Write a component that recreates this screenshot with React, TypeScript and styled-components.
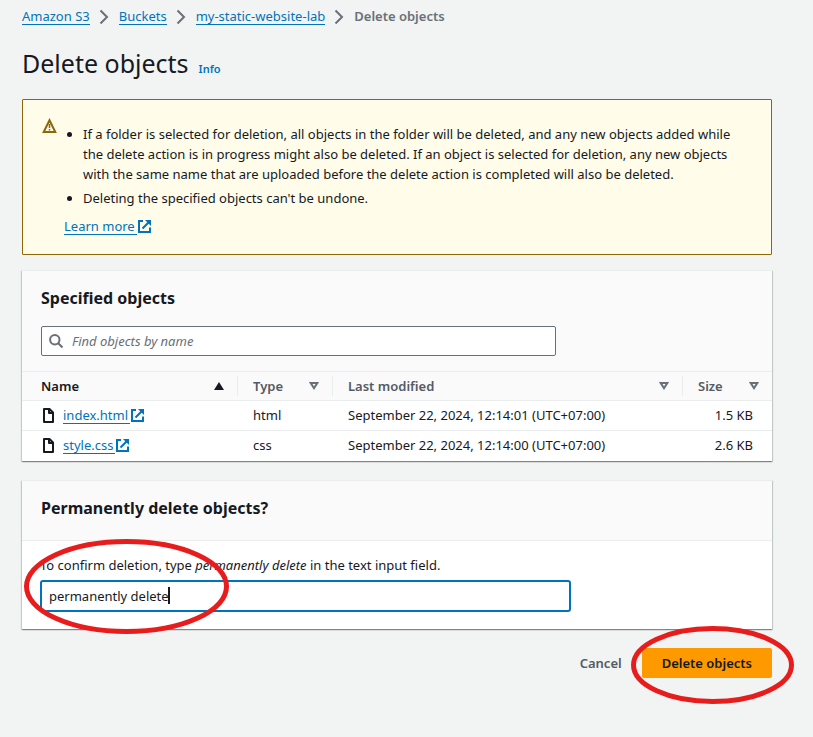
import React, { useState } from "react";
import styled, { createGlobalStyle } from "styled-components";

const GlobalStyle = createGlobalStyle`
  *, *::before, *::after { box-sizing: border-box; }
  body {
    margin: 0;
    background: #f2f3f3;
    color: #16191f;
    font-family: "Noto Sans", "Open Sans", sans-serif;
    font-size: 13px;
    line-height: 20px;
  }
`;

const Page = styled.main`
  padding: 6px 41px 48px 22px;
`;

const Crumbs = styled.ol`
  display: flex;
  align-items: center;
  flex-wrap: wrap;
  gap: 10px;
  margin: 0;
  padding: 0;
  list-style: none;
`;

const Crumb = styled.li`
  display: flex;
  align-items: center;
  gap: 9px;
  color: #687078;
  font-weight: 600;
`;

const TextLink = styled.a`
  color: #0073bb;
  font-weight: 400;
  line-height: 16px;
  text-decoration: none;
  border-bottom: 1px solid #0073bb;
`;

const TitleRow = styled.div`
  display: flex;
  align-items: baseline;
  gap: 10px;
  margin-top: 20px;
`;

const Title = styled.h1`
  margin: 0;
  font-size: 25px;
  font-weight: 400;
  line-height: 34px;
`;

const InfoLink = styled.a`
  color: #0073bb;
  font-size: 11px;
  font-weight: 600;
  text-decoration: none;
`;

const Alert = styled.section`
  display: flex;
  gap: 6px;
  margin-top: 19px;
  padding: 18px 37px 18px 19px;
  border: 1px solid #8d6605;
  border-radius: 1px;
  background: #fffce9;
`;

const AlertBody = styled.div`
  padding-top: 6px;
`;

const AlertList = styled.ul`
  display: grid;
  gap: 4px;
  margin: 0 0 8px;
  padding-left: 19px;
`;

const Card = styled.section`
  position: relative;
  margin-top: ${({ $gap }: { $gap: number }) => $gap}px;
  padding-bottom: 1px;
  border-top: 1px solid #eaeded;
  background: #ffffff;
  box-shadow: 0 1px 1px rgba(0, 28, 36, 0.3), 1px 1px 1px rgba(0, 28, 36, 0.15),
    -1px 1px 1px rgba(0, 28, 36, 0.15);
`;

const CardHeader = styled.header`
  display: grid;
  gap: 17px;
  padding: 17px 19px 15px;
  border-bottom: 1px solid #eaeded;
  background: #fafafa;
`;

const CardTitle = styled.h2`
  margin: 0;
  font-size: 16px;
  font-weight: 700;
  line-height: 21px;
`;

const SearchBox = styled.label`
  display: flex;
  align-items: center;
  gap: 8px;
  width: 100%;
  max-width: 515px;
  height: 30px;
  padding: 0 7px;
  border: 1px solid #687078;
  border-radius: 2px;
  background: #ffffff;
`;

const SearchInput = styled.input`
  flex: 1;
  min-width: 0;
  padding: 0;
  border: 0;
  outline: 0;
  background: transparent;
  color: inherit;
  font: inherit;
  &::placeholder {
    color: #687078;
    font-style: italic;
    opacity: 1;
  }
`;

const Table = styled.table`
  width: 100%;
  table-layout: fixed;
  border-collapse: collapse;
`;

const HeadCell = styled.th<{ $width?: number; $active?: boolean }>`
  width: ${({ $width }) => ($width ? `${$width}px` : "auto")};
  height: 28px;
  padding: 0;
  background: #fafafa;
  border-bottom: 1px solid #eaeded;
  color: ${({ $active }) => ($active ? "#16191f" : "#545b64")};
`;

const SortButton = styled.button<{ $divided: boolean }>`
  display: flex;
  align-items: center;
  justify-content: space-between;
  width: 100%;
  height: 20px;
  padding: 0 13px 0 ${({ $divided }) => ($divided ? 15 : 19)}px;
  border: 0;
  border-left: ${({ $divided }) => ($divided ? "1px solid #eaeded" : "0")};
  background: transparent;
  color: inherit;
  font: inherit;
  font-weight: 600;
  cursor: pointer;
`;

const Row = styled.tr`
  & + & > td { border-top: 1px solid #eaeded; }
`;

const Cell = styled.td<{ $first?: boolean; $end?: boolean }>`
  height: 30px;
  padding: 0 ${({ $end }) => ($end ? 19 : 8)}px 0 ${({ $first }) => ($first ? 19 : 16)}px;
  text-align: ${({ $end }) => ($end ? "right" : "left")};
  white-space: nowrap;
`;

const FileName = styled.span`
  display: flex;
  align-items: center;
  gap: 7px;
`;

const ExternalAnchor = styled.a`
  display: inline-flex;
  align-items: center;
  color: #0073bb;
  line-height: 16px;
  text-decoration: none;
`;

const ExternalText = styled.span`
  padding-right: 2px;
  border-bottom: 1px solid #0073bb;
`;

const ConfirmHeader = styled(CardHeader)`
  padding: 17px 19px 21px;
`;

const ConfirmBody = styled.div`
  display: grid;
  gap: 5px;
  padding: 14px 19px 16px 18px;
`;

const ConfirmField = styled.div`
  position: relative;
  max-width: 531px;
`;

const ConfirmInput = styled.input`
  display: block;
  width: 100%;
  height: 32px;
  padding: 0 7px 1px;
  border: 2px solid #0073bb;
  border-radius: 3px;
  outline: 0;
  background: #ffffff;
  color: inherit;
  font: inherit;
  caret-color: transparent;
`;

const CaretTrack = styled.div`
  position: absolute;
  top: 7px;
  left: 9px;
  display: flex;
  height: 17px;
  pointer-events: none;
`;

const CaretText = styled.span`
  visibility: hidden;
  white-space: pre;
`;

const Caret = styled.span`
  width: 2px;
  margin-left: -1px;
  background: #16191f;
`;

const Actions = styled.footer`
  display: flex;
  justify-content: flex-end;
  align-items: center;
  margin-top: 19px;
`;

const ActionButton = styled.button<{ $primary?: boolean }>`
  height: 30px;
  padding: 0 20px 1px;
  border: 0;
  border-radius: 2px;
  background: ${({ $primary }) => ($primary ? "#ff9900" : "transparent")};
  color: ${({ $primary }) => ($primary ? "#16191f" : "#545b64")};
  font: inherit;
  font-weight: 600;
  cursor: pointer;
`;

const PrimaryAction = styled.div`
  position: relative;
`;

const Mark = styled.svg<{ $top: number; $left: number }>`
  position: absolute;
  z-index: 1;
  top: ${({ $top }) => $top}px;
  left: ${({ $left }) => $left}px;
  pointer-events: none;
`;

function Highlight({ width, height, top, left }: { width: number; height: number; top: number; left: number }) {
  return (
    <Mark $top={top} $left={left} width={width} height={height} aria-hidden="true">
      <ellipse
        cx={width / 2}
        cy={height / 2}
        rx={width / 2 - 2.5}
        ry={height / 2 - 2.5}
        fill="none"
        stroke="#e71d1d"
        strokeWidth="5"
      />
    </Mark>
  );
}

const Chevron = () => (
  <svg width="10" height="16" viewBox="0 0 10 16" fill="none" stroke="#687078" strokeWidth="2" aria-hidden="true">
    <path d="M1.500 2.500 8 9l-6.500 6.500" />
  </svg>
);

const ExternalIcon = () => (
  <svg width="15" height="15" viewBox="0 0 15 15" fill="none" stroke="#0073bb" strokeWidth="2" aria-hidden="true">
    <path d="M6 2H2v11h11V8.500M5.500 9.500 12 3" />
    <path d="M8 1h6v6l-2-2-2-2z" fill="#0073bb" stroke="none" />
  </svg>
);

const WarningIcon = () => (
  <svg width="16" height="16" viewBox="0 0 16 16" fill="none" stroke="#8d6605" strokeWidth="2" aria-hidden="true">
    <path d="M7.500 2.200 1.700 14h11.600z" />
    <path d="M7.500 6v4M7.500 11v1.500" strokeWidth="1.500" />
  </svg>
);

const SearchIcon = () => (
  <svg width="15" height="15" viewBox="0 0 15 15" fill="none" stroke="#687078" strokeWidth="2" aria-hidden="true">
    <circle cx="5.800" cy="5.800" r="4.700" />
    <path d="m9.200 9.200 4.300 4.300" />
  </svg>
);

const FileIcon = () => (
  <svg width="15" height="16" viewBox="0 0 15 16" fill="none" stroke="#16191f" strokeWidth="2" aria-hidden="true">
    <path d="M3 2h5.500L12 5.500V15H3zM8 2v4h4" strokeLinejoin="round" />
  </svg>
);

const SortIcon = ({ active }: { active: boolean }) =>
  active ? (
    <svg width="10" height="8" viewBox="0 0 10 8" aria-hidden="true">
      <path d="M5 0l5 8H0z" fill="#16191f" />
    </svg>
  ) : (
    <svg width="10" height="8" viewBox="0 0 10 8" aria-hidden="true">
      <path d="M1.700 1h6.600L5 6.200z" fill="none" stroke="#687078" strokeWidth="2" />
    </svg>
  );

const ExternalLink = ({ children }: { children: string }) => (
  <ExternalAnchor href="#">
    <ExternalText>{children}</ExternalText>
    <ExternalIcon />
  </ExternalAnchor>
);

const crumbs = ["Amazon S3", "Buckets", "my-static-website-lab"];

const columns = [
  { label: "Name", width: 215 },
  { label: "Type", width: 95 },
  { label: "Last modified" },
  { label: "Size", width: 90 },
];

const files = [
  { name: "index.html", type: "html", modified: "September 22, 2024, 12:14:01 (UTC+07:00)", size: "1.5 KB" },
  { name: "style.css", type: "css", modified: "September 22, 2024, 12:14:00 (UTC+07:00)", size: "2.6 KB" },
];

export default function App() {
  const [query, setQuery] = useState("");
  const [confirmation, setConfirmation] = useState("permanently delete");

  return (
    <Page>
      <GlobalStyle />
      <nav aria-label="Breadcrumbs">
        <Crumbs>
          {crumbs.map((label) => (
            <Crumb key={label}>
              <TextLink href="#">{label}</TextLink>
              <Chevron />
            </Crumb>
          ))}
          <Crumb aria-current="page">Delete objects</Crumb>
        </Crumbs>
      </nav>

      <TitleRow>
        <Title>Delete objects</Title>
        <InfoLink href="#">Info</InfoLink>
      </TitleRow>

      <Alert>
        <div><WarningIcon /></div>
        <AlertBody>
          <AlertList>
            <li>
              If a folder is selected for deletion, all objects in the folder will be deleted, and any new objects
              added while the delete action is in progress might also be deleted. If an object is selected for
              deletion, any new objects with the same name that are uploaded before the delete action is completed
              will also be deleted.
            </li>
            <li>Deleting the specified objects can't be undone.</li>
          </AlertList>
          <ExternalLink>Learn more</ExternalLink>
        </AlertBody>
      </Alert>

      <Card $gap={15}>
        <CardHeader>
          <CardTitle>Specified objects</CardTitle>
          <SearchBox>
            <SearchIcon />
            <SearchInput
              type="text"
              aria-label="Find objects by name"
              placeholder="Find objects by name"
              value={query}
              onChange={(e) => setQuery(e.target.value)}
            />
          </SearchBox>
        </CardHeader>
        <Table>
          <thead>
            <tr>
              {columns.map(({ label, width }, i) => (
                <HeadCell key={label} $width={width} $active={i === 0} scope="col">
                  <SortButton type="button" $divided={i > 0}>
                    {label}
                    <SortIcon active={i === 0} />
                  </SortButton>
                </HeadCell>
              ))}
            </tr>
          </thead>
          <tbody>
            {files.map((file) => (
              <Row key={file.name}>
                <Cell $first>
                  <FileName>
                    <FileIcon />
                    <ExternalLink>{file.name}</ExternalLink>
                  </FileName>
                </Cell>
                <Cell>{file.type}</Cell>
                <Cell>{file.modified}</Cell>
                <Cell $end>{file.size}</Cell>
              </Row>
            ))}
          </tbody>
        </Table>
      </Card>

      <Card $gap={19}>
        <ConfirmHeader>
          <CardTitle>Permanently delete objects?</CardTitle>
        </ConfirmHeader>
        <ConfirmBody>
          <label htmlFor="confirmation">
            To confirm deletion, type <em>permanently delete</em> in the text input field.
          </label>
          <ConfirmField>
            <ConfirmInput
              id="confirmation"
              type="text"
              value={confirmation}
              onChange={(e) => setConfirmation(e.target.value)}
            />
            <CaretTrack aria-hidden="true">
              <CaretText>{confirmation}</CaretText>
              <Caret />
            </CaretTrack>
          </ConfirmField>
        </ConfirmBody>
        <Highlight width={205} height={95} top={58} left={2} />
      </Card>

      <Actions>
        <ActionButton type="button">Cancel</ActionButton>
        <PrimaryAction>
          <ActionButton type="button" $primary>Delete objects</ActionButton>
          <Highlight width={163} height={78} top={-22} left={-11} />
        </PrimaryAction>
      </Actions>
    </Page>
  );
}
